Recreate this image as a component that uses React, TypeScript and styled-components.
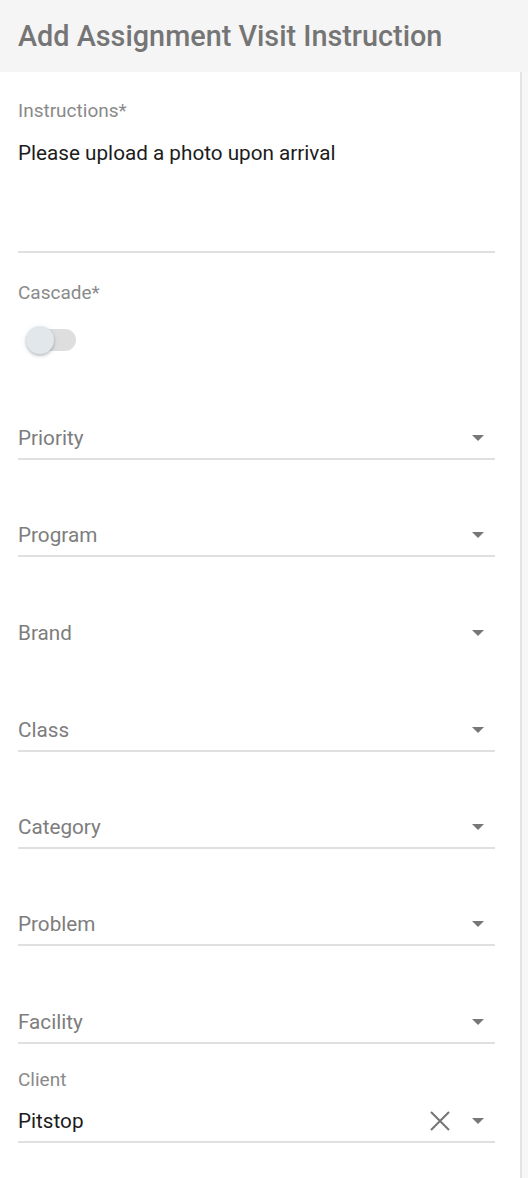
import React from 'react'
import styled, { createGlobalStyle } from 'styled-components'

const GlobalStyle = createGlobalStyle`
  html, body {
    margin: 0;
    padding: 0;
    background: #f7f7f7;
    font-family: Roboto, 'Liberation Sans', sans-serif;
  }
`

const Page = styled.div`
  width: 528px;
  min-height: 1178px;
  display: flex;
  flex-direction: column;
`

const Header = styled.header`
  height: 72px;
  display: flex;
  align-items: center;
  padding: 0 18px;
  background: #f5f5f5;
  box-sizing: border-box;
`

const Title = styled.h1`
  margin: 0;
  font-size: 28.8px;
  font-weight: 500;
  color: #757575;
`

const Body = styled.div`
  flex: 1;
  display: flex;
`

const Panel = styled.main`
  width: 522px;
  background: #fff;
  border-right: 2px solid #e4e4e4;
  box-sizing: border-box;
  padding: 28px 25px 0 18px;
`

const Label = styled.div`
  font-size: 19px;
  line-height: 22px;
  color: #8a8a8a;
`

const TextArea = styled.div`
  height: 131px;
  padding-top: 19px;
  box-sizing: border-box;
  border-bottom: 2px solid #e0e0e0;
  font-size: 20.7px;
  line-height: 24px;
  color: #1c1c1c;
`

const SwitchField = styled.div`
  margin-top: 29px;
`

const Switch = styled.div`
  margin: 22px 0 0 8px;
  width: 50px;
  height: 28px;
  display: flex;
  align-items: center;
  position: relative;
`

const Track = styled.div`
  width: 50px;
  height: 22px;
  border-radius: 11px;
  background: #dedede;
`

const Thumb = styled.div`
  position: absolute;
  left: 0;
  top: 0;
  width: 28px;
  height: 28px;
  border-radius: 50%;
  background: #e2e7ec;
  box-shadow: 0 2px 3px rgba(0, 0, 0, 0.2), 0 1px 6px rgba(0, 0, 0, 0.08);
`

const Select = styled.div<{ $line?: boolean; $gap: number }>`
  margin-top: ${(p) => p.$gap}px;
  height: 42px;
  box-sizing: border-box;
  display: flex;
  align-items: center;
  border-bottom: 2px solid ${(p) => (p.$line ? '#e0e0e0' : 'transparent')};
`

const SelectText = styled.div<{ $filled?: boolean }>`
  flex: 1;
  font-size: 20.7px;
  color: ${(p) => (p.$filled ? '#1c1c1c' : '#7d7d7d')};
`

const ClientField = styled.div`
  margin-top: 25px;
`

const ClearButton = styled.div`
  width: 20px;
  height: 20px;
  margin-right: 22px;
  display: flex;
  align-items: center;
  justify-content: center;
`

const Caret = styled.div`
  width: 0;
  height: 0;
  margin-right: 11px;
  border-left: 6.5px solid transparent;
  border-right: 6.5px solid transparent;
  border-top: 6.5px solid #777;
`

const Rest = styled.div`
  flex: 1;
  background: #f7f7f7;
`

const selects: { name: string; line: boolean }[] = [
  { name: 'Program', line: true },
  { name: 'Brand', line: false },
  { name: 'Class', line: true },
  { name: 'Category', line: true },
  { name: 'Problem', line: true },
  { name: 'Facility', line: true },
]

const App = () => (
  <Page>
    <GlobalStyle />
    <Header>
      <Title>Add Assignment Visit Instruction</Title>
    </Header>
    <Body>
      <Panel>
        <Label>Instructions*</Label>
        <TextArea>Please upload a photo upon arrival</TextArea>

        <SwitchField>
          <Label>Cascade*</Label>
          <Switch>
            <Track />
            <Thumb />
          </Switch>
        </SwitchField>

        <Select $line $gap={64}>
          <SelectText>Priority</SelectText>
          <Caret />
        </Select>
        {selects.map((s) => (
          <Select key={s.name} $line={s.line} $gap={55.3}>
            <SelectText>{s.name}</SelectText>
            <Caret />
          </Select>
        ))}

        <ClientField>
          <Label>Client</Label>
          <Select $line $gap={10}>
            <SelectText $filled>Pitstop</SelectText>
            <ClearButton>
              <svg width="20" height="20" viewBox="0 0 20 20">
                <path d="M1 1L19 19M19 1L1 19" stroke="#757575" strokeWidth="2" fill="none" />
              </svg>
            </ClearButton>
            <Caret />
          </Select>
        </ClientField>
      </Panel>
      <Rest />
    </Body>
  </Page>
)

export default App
